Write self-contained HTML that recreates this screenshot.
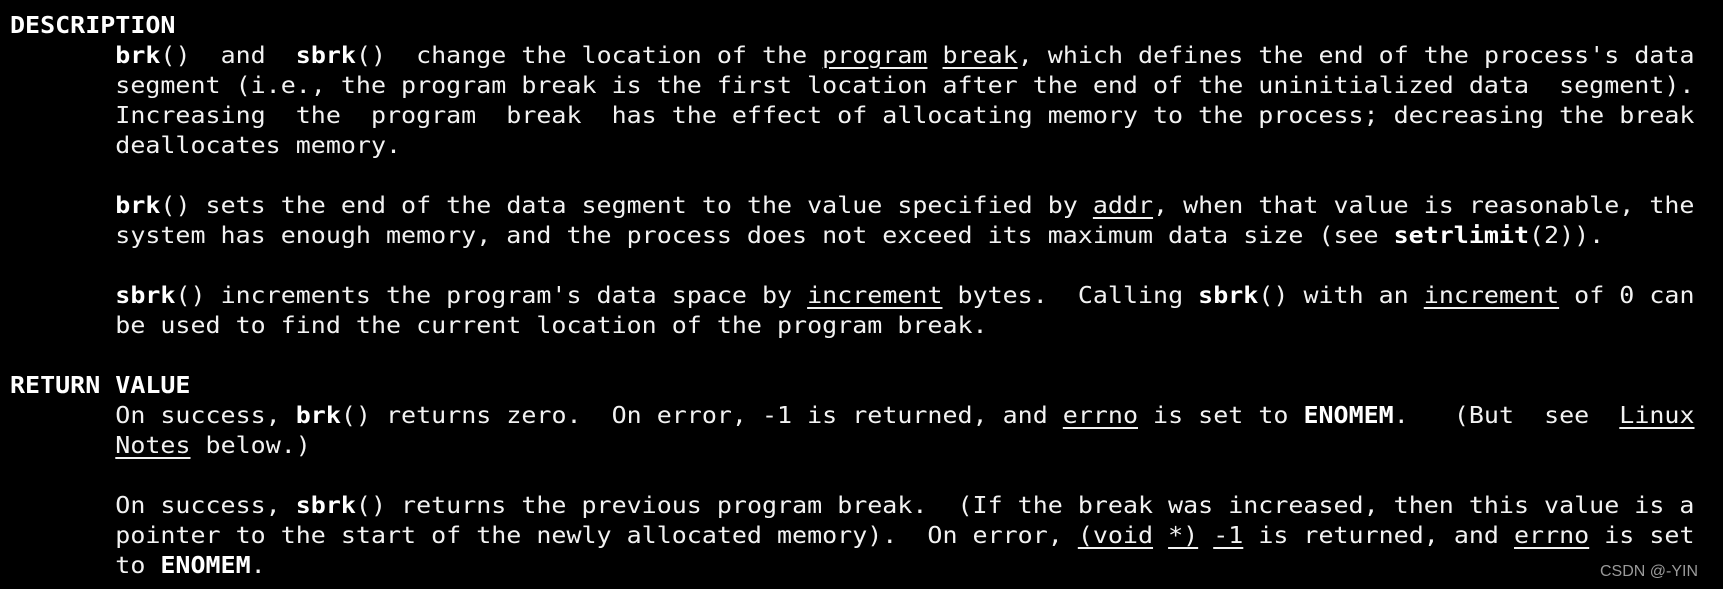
<!DOCTYPE html>
<html><head><meta charset="utf-8"><style>
html,body{margin:0;padding:0;background:#000;}
body{width:1723px;height:589px;overflow:hidden;position:relative;}
.l{position:absolute;left:10px;white-space:pre;font-family:"DejaVu Sans Mono","Liberation Mono",monospace;font-size:23.5px;line-height:30px;height:30px;color:#f2f2f2;transform:scaleX(1.063);transform-origin:0 0;}
b{color:#fff;font-weight:bold;}
u{text-decoration:underline;text-underline-offset:4px;text-decoration-thickness:1.5px;}
.w{position:absolute;left:1600px;top:563px;font-family:"Liberation Sans",sans-serif;font-size:16px;color:#9a9a9a;}
</style></head><body>
<div class="l" style="top:10px"><b>DESCRIPTION</b></div>
<div class="l" style="top:40px">       <b>brk</b>()  and  <b>sbrk</b>()  change the location of the <u>program</u> <u>break</u>, which defines the end of the process's data</div>
<div class="l" style="top:70px">       segment (i.e., the program break is the first location after the end of the uninitialized data  segment).</div>
<div class="l" style="top:100px">       Increasing  the  program  break  has the effect of allocating memory to the process; decreasing the break</div>
<div class="l" style="top:130px">       deallocates memory.</div>
<div class="l" style="top:190px">       <b>brk</b>() sets the end of the data segment to the value specified by <u>addr</u>, when that value is reasonable, the</div>
<div class="l" style="top:220px">       system has enough memory, and the process does not exceed its maximum data size (see <b>setrlimit</b>(2)).</div>
<div class="l" style="top:280px">       <b>sbrk</b>() increments the program's data space by <u>increment</u> bytes.  Calling <b>sbrk</b>() with an <u>increment</u> of 0 can</div>
<div class="l" style="top:310px">       be used to find the current location of the program break.</div>
<div class="l" style="top:370px"><b>RETURN VALUE</b></div>
<div class="l" style="top:400px">       On success, <b>brk</b>() returns zero.  On error, -1 is returned, and <u>errno</u> is set to <b>ENOMEM</b>.   (But  see  <u>Linux</u></div>
<div class="l" style="top:430px">       <u>Notes</u> below.)</div>
<div class="l" style="top:490px">       On success, <b>sbrk</b>() returns the previous program break.  (If the break was increased, then this value is a</div>
<div class="l" style="top:520px">       pointer to the start of the newly allocated memory).  On error, <u>(void</u> <u>*)</u> <u>-1</u> is returned, and <u>errno</u> is set</div>
<div class="l" style="top:550px">       to <b>ENOMEM</b>.</div>
<div class="w">CSDN @-YIN</div>
</body></html>
